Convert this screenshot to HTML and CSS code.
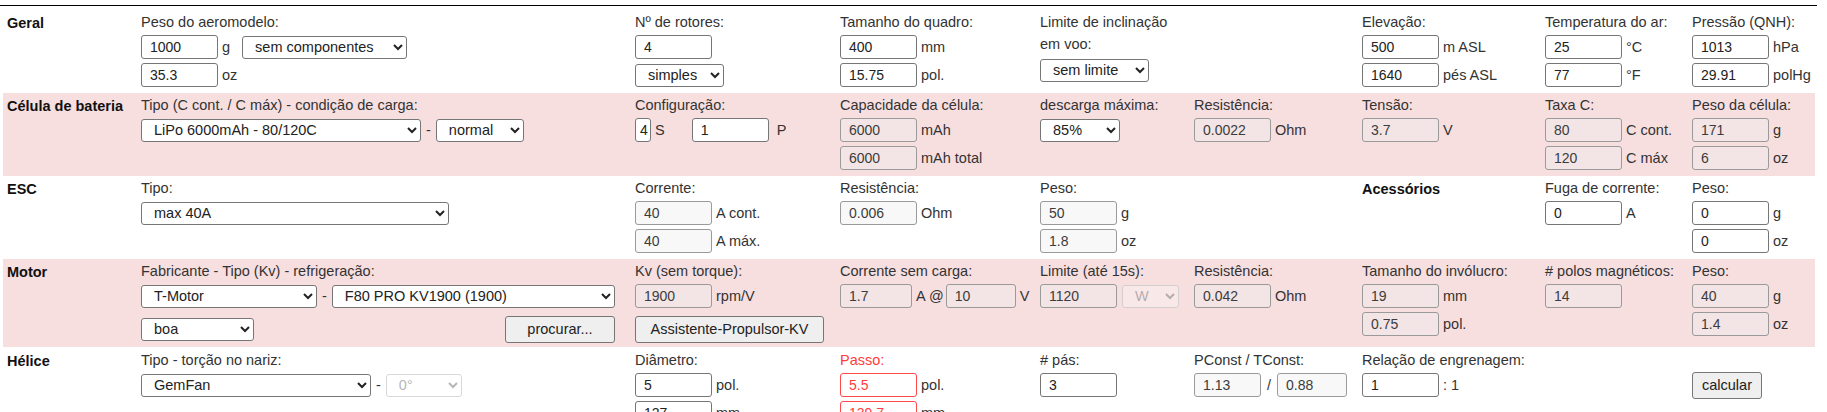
FILE: index.html
```html
<!DOCTYPE html>
<html lang="pt">
<head>
<meta charset="utf-8">
<title>xcoptercalc</title>
<link rel="stylesheet" href="styles.css">
</head>
<body>
<div class="topline"></div>
<div class="calc">

  <!-- Geral -->
  <div class="row">
    <div class="cell grp">Geral</div>
    <div class="cell">
      <div class="lbl">Peso do aeromodelo:</div>
      <div class="line"><input class="in" value="1000"><span class="u">g</span><select class="sel w-semcomp"><option>sem componentes</option></select></div>
      <div class="line"><input class="in" value="35.3"><span class="u">oz</span></div>
    </div>
    <div class="cell">
      <div class="lbl">Nº de rotores:</div>
      <div class="line"><input class="in" value="4"></div>
      <div class="line"><select class="sel w-simples"><option>simples</option></select></div>
    </div>
    <div class="cell">
      <div class="lbl">Tamanho do quadro:</div>
      <div class="line"><input class="in" value="400"><span class="u">mm</span></div>
      <div class="line"><input class="in" value="15.75"><span class="u">pol.</span></div>
    </div>
    <div class="cell">
      <div class="lbl">Limite de inclinação<br>em voo:</div>
      <div class="line"><select class="sel w-semlim"><option>sem limite</option></select></div>
    </div>
    <div class="cell"></div>
    <div class="cell">
      <div class="lbl">Elevação:</div>
      <div class="line"><input class="in" value="500"><span class="u">m ASL</span></div>
      <div class="line"><input class="in" value="1640"><span class="u">pés ASL</span></div>
    </div>
    <div class="cell">
      <div class="lbl">Temperatura do ar:</div>
      <div class="line"><input class="in" value="25"><span class="u">°C</span></div>
      <div class="line"><input class="in" value="77"><span class="u">°F</span></div>
    </div>
    <div class="cell">
      <div class="lbl">Pressão (QNH):</div>
      <div class="line"><input class="in" value="1013"><span class="u">hPa</span></div>
      <div class="line"><input class="in" value="29.91"><span class="u">polHg</span></div>
    </div>
  </div>

  <!-- Célula de bateria -->
  <div class="row pink">
    <div class="cell grp">Célula de bateria</div>
    <div class="cell">
      <div class="lbl">Tipo (C cont. / C máx) - condição de carga:</div>
      <div class="line"><select class="sel w-lipo"><option>LiPo 6000mAh - 80/120C</option></select><span class="dash">-</span><select class="sel w-normal"><option>normal</option></select></div>
    </div>
    <div class="cell">
      <div class="lbl">Configuração:</div>
      <div class="line"><input class="in tiny" value="4"><span class="u">S</span><input class="in gap-s" value="1"><span class="u up">P</span></div>
    </div>
    <div class="cell">
      <div class="lbl">Capacidade da célula:</div>
      <div class="line"><input class="in ro" value="6000" readonly><span class="u">mAh</span></div>
      <div class="line"><input class="in ro" value="6000" readonly><span class="u">mAh total</span></div>
    </div>
    <div class="cell">
      <div class="lbl">descarga máxima:</div>
      <div class="line"><select class="sel w-85"><option>85%</option></select></div>
    </div>
    <div class="cell">
      <div class="lbl">Resistência:</div>
      <div class="line"><input class="in ro" value="0.0022" readonly><span class="u">Ohm</span></div>
    </div>
    <div class="cell">
      <div class="lbl">Tensão:</div>
      <div class="line"><input class="in ro" value="3.7" readonly><span class="u">V</span></div>
    </div>
    <div class="cell">
      <div class="lbl">Taxa C:</div>
      <div class="line"><input class="in ro" value="80" readonly><span class="u">C cont.</span></div>
      <div class="line"><input class="in ro" value="120" readonly><span class="u">C máx</span></div>
    </div>
    <div class="cell">
      <div class="lbl">Peso da célula:</div>
      <div class="line"><input class="in ro" value="171" readonly><span class="u">g</span></div>
      <div class="line"><input class="in ro" value="6" readonly><span class="u">oz</span></div>
    </div>
  </div>

  <!-- ESC -->
  <div class="row">
    <div class="cell grp">ESC</div>
    <div class="cell">
      <div class="lbl">Tipo:</div>
      <div class="line"><select class="sel w-esc"><option>max 40A</option></select></div>
    </div>
    <div class="cell">
      <div class="lbl">Corrente:</div>
      <div class="line"><input class="in ro" value="40" readonly><span class="u">A cont.</span></div>
      <div class="line"><input class="in ro" value="40" readonly><span class="u">A máx.</span></div>
    </div>
    <div class="cell">
      <div class="lbl">Resistência:</div>
      <div class="line"><input class="in ro" value="0.006" readonly><span class="u">Ohm</span></div>
    </div>
    <div class="cell">
      <div class="lbl">Peso:</div>
      <div class="line"><input class="in ro" value="50" readonly><span class="u">g</span></div>
      <div class="line"><input class="in ro" value="1.8" readonly><span class="u">oz</span></div>
    </div>
    <div class="cell"></div>
    <div class="cell grp">Acessórios</div>
    <div class="cell">
      <div class="lbl">Fuga de corrente:</div>
      <div class="line"><input class="in" value="0"><span class="u">A</span></div>
    </div>
    <div class="cell">
      <div class="lbl">Peso:</div>
      <div class="line"><input class="in" value="0"><span class="u">g</span></div>
      <div class="line"><input class="in" value="0"><span class="u">oz</span></div>
    </div>
  </div>

  <!-- Motor -->
  <div class="row pink motor">
    <div class="cell grp">Motor</div>
    <div class="cell">
      <div class="lbl">Fabricante - Tipo (Kv) - refrigeração:</div>
      <div class="line"><select class="sel w-tmotor"><option>T-Motor</option></select><span class="dash">-</span><select class="sel w-f80"><option>F80 PRO KV1900 (1900)</option></select></div>
      <div class="line line2 narrow"><select class="sel w-boa"><option>boa</option></select><button class="btn w-procurar">procurar...</button></div>
    </div>
    <div class="cell">
      <div class="lbl">Kv (sem torque):</div>
      <div class="line"><input class="in ro" value="1900" readonly><span class="u">rpm/V</span></div>
      <div class="line line2"><button class="btn w-assist">Assistente-Propulsor-KV</button></div>
    </div>
    <div class="cell">
      <div class="lbl">Corrente sem carga:</div>
      <div class="line"><input class="in ro w72" value="1.7" readonly><span class="u">A @</span><input class="in ro w70 gap-at" value="10" readonly><span class="u">V</span></div>
    </div>
    <div class="cell">
      <div class="lbl">Limite (até 15s):</div>
      <div class="line"><input class="in ro" value="1120" readonly><select class="sel dis w-w" disabled><option>W</option></select></div>
    </div>
    <div class="cell">
      <div class="lbl">Resistência:</div>
      <div class="line"><input class="in ro" value="0.042" readonly><span class="u">Ohm</span></div>
    </div>
    <div class="cell">
      <div class="lbl">Tamanho do invólucro:</div>
      <div class="line"><input class="in ro" value="19" readonly><span class="u">mm</span></div>
      <div class="line"><input class="in ro" value="0.75" readonly><span class="u">pol.</span></div>
    </div>
    <div class="cell">
      <div class="lbl"># polos magnéticos:</div>
      <div class="line"><input class="in ro" value="14" readonly></div>
    </div>
    <div class="cell">
      <div class="lbl">Peso:</div>
      <div class="line"><input class="in ro" value="40" readonly><span class="u">g</span></div>
      <div class="line"><input class="in ro" value="1.4" readonly><span class="u">oz</span></div>
    </div>
  </div>

  <!-- Hélice -->
  <div class="row helice">
    <div class="cell grp">Hélice</div>
    <div class="cell">
      <div class="lbl">Tipo - torção no nariz:</div>
      <div class="line"><select class="sel w-gemfan"><option>GemFan</option></select><span class="dash">-</span><select class="sel dis w-0" disabled><option>0°</option></select></div>
    </div>
    <div class="cell">
      <div class="lbl">Diâmetro:</div>
      <div class="line"><input class="in" value="5"><span class="u">pol.</span></div>
      <div class="line"><input class="in" value="127"><span class="u">mm</span></div>
    </div>
    <div class="cell">
      <div class="lbl red">Passo:</div>
      <div class="line"><input class="in redin" value="5.5"><span class="u">pol.</span></div>
      <div class="line"><input class="in redin" value="139.7"><span class="u">mm</span></div>
    </div>
    <div class="cell">
      <div class="lbl"># pás:</div>
      <div class="line"><input class="in" value="3"></div>
    </div>
    <div class="cell">
      <div class="lbl">PConst / TConst:</div>
      <div class="line"><input class="in ro w68" value="1.13" readonly><span class="u slash">/</span><input class="in ro w70" value="0.88" readonly></div>
    </div>
    <div class="cell">
      <div class="lbl">Relação de engrenagem:</div>
      <div class="line"><input class="in" value="1"><span class="u">: 1</span></div>
    </div>
    <div class="cell"></div>
    <div class="cell">
      <div class="lbl">&nbsp;</div>
      <div class="line"><button class="btn w-calc">calcular</button></div>
    </div>
  </div>

</div>
</body>
</html>
```
FILE: styles.css
```css
html, body {
  margin: 0;
  padding: 0;
  background: #fff;
}
body {
  font-family: "Liberation Sans", Arial, sans-serif;
  font-size: 14.5px;
  color: #333;
  width: 1827px;
  height: 412px;
  overflow: hidden;
}
.topline {
  margin-top: 5px;
  width: 1817px;
  height: 1px;
  background: #000;
}
.calc {
  margin: 4px 0 0 3px;
  width: 1812px;
}
.row {
  display: grid;
  grid-template-columns: 134px 494px 205px 200px 154px 168px 183px 147px 127px;
  height: 83px;
}
.row.motor {
  height: 88px;
}
.pink {
  background: #f7dfe0;
}
.cell {
  padding: 1px 0 0 4px;
  min-width: 0;
}
.helice .cell {
  padding-top: 2px;
}
.grp {
  font-weight: bold;
  color: #111;
  line-height: 22px;
  padding-top: 2px;
}
.helice .grp {
  padding-top: 3px;
}
.lbl {
  line-height: 22px;
  white-space: nowrap;
}
.line {
  display: flex;
  align-items: center;
  height: 28px;
}
.line2 {
  height: 32px;
  margin-top: 3px;
}
.narrow {
  width: 474px;
}
.u {
  margin-left: 4px;
  white-space: nowrap;
}
.up { margin-left: 8px; }
.slash { margin: 0 6px 0 6px; }
.red { color: #ff3b3b; }
.dash {
  margin: 0 5px;
}

.in {
  box-sizing: border-box;
  width: 77px;
  height: 24px;
  margin: 0;
  padding: 0 0 0 8px;
  border: 1px solid #767676;
  border-radius: 3px;
  background: #fff;
  font-family: "Liberation Sans", Arial, sans-serif;
  font-size: 14px;
  color: #222;
  outline: none;
}
.in.ro {
  background: #f8f8f8;
  border-color: #9a9a9a;
  color: #3c3c3c;
}
.pink .in.ro {
  background: #f3e4e5;
}
.in.tiny {
  width: 16px;
  padding: 0 0 0 4px;
}
.gap-s { margin-left: 27px; }
.in.w72 { width: 72px; }
.in.w70 { width: 70px; }
.gap-at { margin-left: 2px; }
.in.w68 { width: 67px; }
.in.redin {
  border-color: #ff4a4a;
  color: #ff3b3b;
}

.sel {
  box-sizing: border-box;
  height: 23px;
  margin: 0;
  padding: 0 0 0 8px;
  border: 1px solid #767676;
  border-radius: 3px;
  background: #fff;
  font-family: "Liberation Sans", Arial, sans-serif;
  font-size: 14.5px;
  color: #222;
}
.sel.dis {
  color: #999;
  border-color: #c8c8c8;
  background: rgba(255,255,255,0.4);
}
.w-semcomp { width: 165px; margin-left: 12px; }
.w-simples { width: 89px; }
.w-semlim { width: 109px; margin-top: 2px; }
.w-lipo { width: 280px; }
.w-normal { width: 88px; }
.w-85 { width: 80px; }
.w-esc { width: 308px; }
.w-tmotor { width: 176px; }
.w-f80 { width: 283px; }
.w-boa { width: 113px; }
.w-w { width: 57px; margin-left: 5px; }
.w-gemfan { width: 230px; }
.w-0 { width: 76px; }

.btn {
  box-sizing: border-box;
  height: 27px;
  margin: 0;
  padding: 0 8px;
  border: 1px solid #767676;
  border-radius: 3px;
  background: #efefef;
  font-family: "Liberation Sans", Arial, sans-serif;
  font-size: 14.5px;
  color: #222;
}
.w-procurar { width: 110px; margin-left: auto; }
.w-assist { width: 189px; }
.w-calc { width: 70px; }
```
